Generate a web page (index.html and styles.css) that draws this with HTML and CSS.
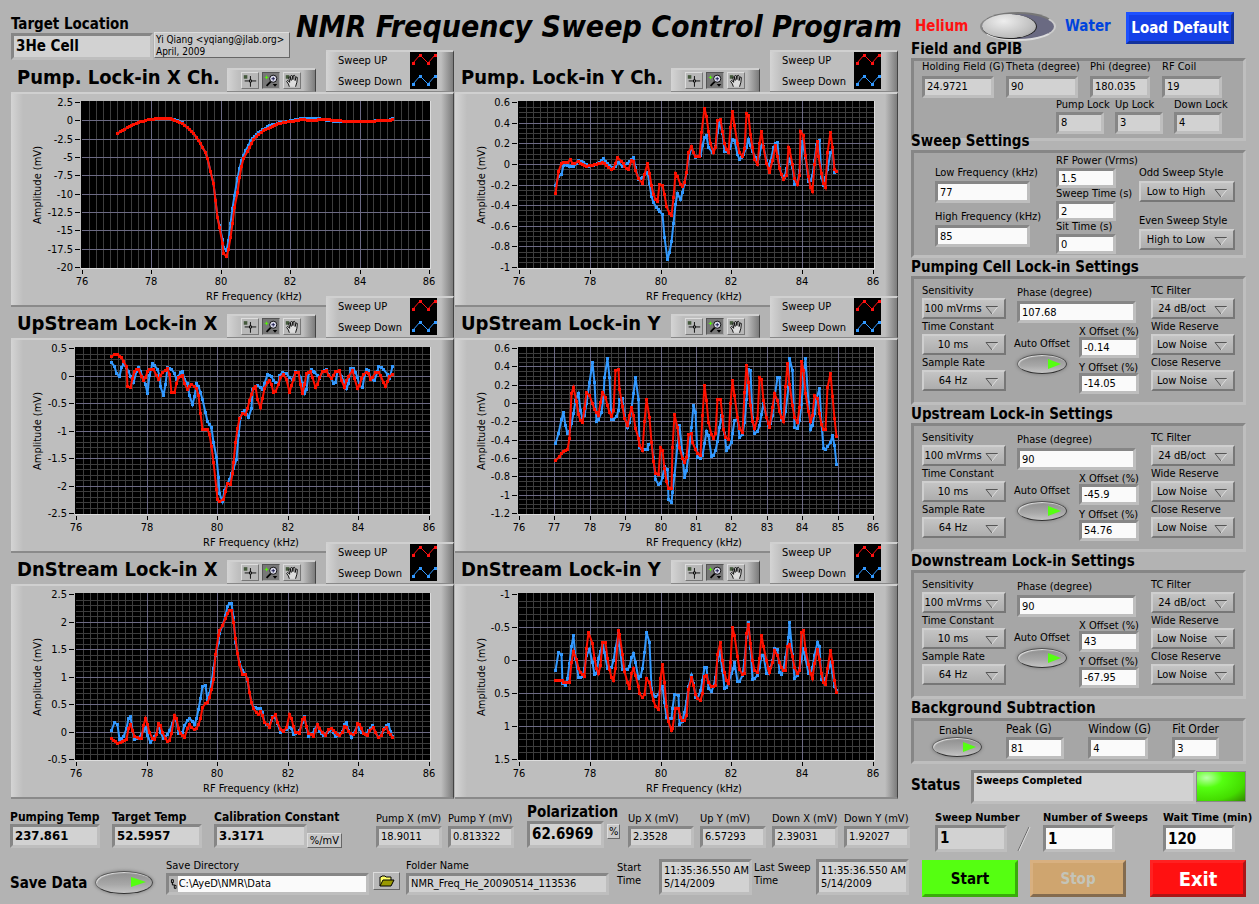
FILE: index.html
```html
<!DOCTYPE html>
<html lang="en">
  <head>
    <title>NMR Frequency Sweep Control Program</title>
    <meta charset="UTF-8">
    <link rel="stylesheet" href="styles.css">
  </head>

  <body>
  <!--Shared icons-->
  <svg class="defs" width="0" height="0">
    <symbol id="arrow" viewBox="0 0 14 10">
      <path d="M1 1.500H13M1 1.500L7 9" fill="none" stroke="#555"/>
      <path d="M13 1.500L7 9" fill="none" stroke="#ddd"/>
    </symbol>
    <symbol id="cross" viewBox="0 0 18 16">
      <path d="M2 2h4v4H2z" fill="#44583c"/>
      <path d="M3 8.500H16M9.500 3V15" stroke="#000"/>
      <path d="M8 7h3v3H8z" fill="#000"/><path d="M9 8h1v1H9z" fill="#fff"/>
    </symbol>
    <symbol id="lens" viewBox="0 0 18 16">
      <path d="M2 4.500H6M4 2.500V6.500" stroke="#5f0"/>
      <path d="M9 9L4 14" stroke="#000" stroke-width="2"/>
      <circle cx="11.500" cy="6" r="4" fill="#dde" stroke="#000"/>
      <path d="M9.500 6h4M11.500 4v4" stroke="#114"/>
      <path d="M11 12h5l-2.500 3z" fill="#000"/>
    </symbol>
    <symbol id="hand" viewBox="0 0 18 16">
      <path d="M2 2h4v4H2z" fill="#44583c"/>
      <path d="M6 15L5 12 3 9 4 8 6.500 10 5.500 5 6 4 7 4 8 8 7.500 3 8.500 2 9.500 3 10 7 10.500 2.500 11.500 2 12.500 3 12.500 8 13.500 4.500 14.500 4 15 5 14.500 10 13 15" fill="#ddd" stroke="#000"/>
    </symbol>
    <symbol id="samples" viewBox="0 0 27 37">
      <path d="M3 11L10 3L18 11L25 3" fill="none" stroke="#f11"/>
      <path d="M2 10h3v3H2zM9 2h3v3H9zM17 10h3v3h-3zM24 2h3v3h-3z" fill="#f11"/>
      <path d="M3 32L10 24L18 32L25 24" fill="none" stroke="#39f"/>
      <path d="M2 31h3v3H2zM9 23h3v3H9zM17 31h3v3h-3zM24 23h3v3h-3z" fill="#39f"/>
    </symbol>
    <symbol id="folder" viewBox="0 0 16 12">
      <path d="M1 11V2h1l1-1h3l1 1h5v3" fill="#ff6" stroke="#000"/>
      <path d="M1 11L4 5H15L12 11z" fill="#990" stroke="#000"/>
    </symbol>
    <symbol id="path" viewBox="0 0 7 12">
      <path d="M1.500 1.500h2v3h-2zM4.500 7.500h2v3h-2zM2.500 4.500V7H5" fill="none" stroke="#000"/>
    </symbol>
  </svg>

  <div class="app">
    <main class="left">
      <header class="header">
        <div class="target">
          <label class="bold15" for="target">Target Location</label>
          <output class="box target-box" id="target">3He Cell</output>
        </div>
        <div class="author">Yi Qiang &lt;yqiang@jlab.org&gt;<br>April, 2009</div>
        <h1>NMR Frequency Sweep Control Program</h1>
      </header>

      <!--Filled by charts.js-->
      <section class="charts" id="charts"></section>

      <section class="readouts">
        <div class="field w90"><label class="bold12" for="ptemp">Pumping Temp</label><output class="box big" id="ptemp">237.861</output></div>
        <div class="field w90"><label class="bold12" for="ttemp">Target Temp</label><output class="box big" id="ttemp">52.5957</output></div>
        <div class="field w128">
          <label class="bold12" for="calib">Calibration Constant</label>
          <div class="with-unit"><output class="box big w96" id="calib">3.3171</output><span class="unit">%/mV</span></div>
        </div>
        <div class="field w66 pump"><label for="pumpx">Pump X (mV)</label><output class="box" id="pumpx">18.9011</output></div>
        <div class="field w66"><label for="pumpy">Pump Y (mV)</label><output class="box" id="pumpy">0.813322</output></div>
        <div class="field polar">
          <label class="bold15" for="polar">Polarization</label>
          <div class="with-unit"><output class="box huge" id="polar">62.6969</output><span class="unit top">%</span></div>
        </div>
        <div class="field w66"><label for="upx">Up X (mV)</label><output class="box" id="upx">2.3528</output></div>
        <div class="field w66"><label for="upy">Up Y (mV)</label><output class="box" id="upy">6.57293</output></div>
        <div class="field w66"><label for="downx">Down X (mV)</label><output class="box" id="downx">2.39031</output></div>
        <div class="field w66"><label for="downy">Down Y (mV)</label><output class="box" id="downy">1.92027</output></div>
      </section>

      <section class="saving">
        <span class="bold15 save-label" id="save-label">Save Data</span>
        <button class="oval large" aria-labelledby="save-label"></button>
        <div class="field grow">
          <label for="dir">Save Directory</label>
          <div class="path-box"><svg width="7" height="12"><use href="#path"/></svg><input type="text" id="dir" value="C:\AyeD\NMR\Data"></div>
        </div>
        <button class="browse" aria-label="Browse"><svg width="16" height="12"><use href="#folder"/></svg></button>
        <div class="field grow"><label for="folder-name">Folder Name</label><output class="box" id="folder-name">NMR_Freq_He_20090514_113536</output></div>
        <label class="stamp-label start-label" for="start-time">Start Time</label>
        <output class="box stamp" id="start-time">11:35:36.550 AM<br>5/14/2009</output>
        <label class="stamp-label last-label" for="last-time">Last Sweep Time</label>
        <output class="box stamp" id="last-time">11:35:36.550 AM<br>5/14/2009</output>
      </section>
    </main>

    <aside class="right">
      <div class="mode">
        <span class="helium">Helium</span>
        <button class="slide" aria-label="Helium or Water"></button>
        <span class="water">Water</span>
        <button class="load">Load Default</button>
      </div>

      <h2>Field and GPIB</h2>
      <section class="group gpib">
        <div class="row">
          <div class="field w72"><label for="hold">Holding Field (G)</label><output class="box" id="hold">24.9721</output></div>
          <div class="field w72"><label for="theta">Theta (degree)</label><output class="box" id="theta">90</output></div>
          <div class="field w60"><label for="phi">Phi (degree)</label><output class="box" id="phi">180.035</output></div>
          <div class="field w60"><label for="coil">RF Coil</label><output class="box" id="coil">19</output></div>
        </div>
        <div class="row locks">
          <div class="field w48"><label for="plock">Pump Lock</label><output class="box" id="plock">8</output></div>
          <div class="field w48"><label for="ulock">Up Lock</label><output class="box" id="ulock">3</output></div>
          <div class="field w48"><label for="dlock">Down Lock</label><output class="box" id="dlock">4</output></div>
        </div>
      </section>

      <h2 class="over">Sweep Settings</h2>
      <section class="group sweep">
        <div class="stack w95 wide">
          <label for="low">Low Frequency (kHz)</label><input type="text" id="low" value="77">
          <label for="high">High Frequency (kHz)</label><input type="text" id="high" value="85">
        </div>
        <div class="stack w60 tight">
          <label for="power">RF Power (Vrms)</label><input type="text" id="power" value="1.5">
          <label for="stime">Sweep Time (s)</label><input type="text" id="stime" value="2">
          <label for="sit">Sit Time (s)</label><input type="text" id="sit" value="0">
        </div>
        <div class="stack w96 wide">
          <label for="odd">Odd Sweep Style</label>
          <span class="drop"><select id="odd"><option>Low to High</option></select><svg><use href="#arrow"/></svg></span>
          <label for="even">Even Sweep Style</label>
          <span class="drop"><select id="even"><option>High to Low</option></select><svg><use href="#arrow"/></svg></span>
        </div>
      </section>

      <h2>Pumping Cell Lock-in Settings</h2>
      <section class="group lockin">
        <div class="stack">
          <label for="sens1">Sensitivity</label>
          <span class="drop"><select id="sens1"><option>100 mVrms</option></select><svg><use href="#arrow"/></svg></span>
          <label for="tc1">Time Constant</label>
          <span class="drop"><select id="tc1"><option>10 ms</option></select><svg><use href="#arrow"/></svg></span>
          <label for="rate1">Sample Rate</label>
          <span class="drop"><select id="rate1"><option>64 Hz</option></select><svg><use href="#arrow"/></svg></span>
        </div>
        <div class="middle">
          <div class="stack phase"><label for="phase1">Phase (degree)</label><input type="text" id="phase1" value="107.68"></div>
          <div class="auto"><span id="auto1">Auto Offset</span><button class="oval" aria-labelledby="auto1"></button></div>
          <div class="stack offsets">
            <label for="xoff1">X Offset (%)</label><input type="text" id="xoff1" value="-0.14">
            <label for="yoff1">Y Offset (%)</label><input type="text" id="yoff1" value="-14.05">
          </div>
        </div>
        <div class="stack">
          <label for="filter1">TC Filter</label>
          <span class="drop"><select id="filter1"><option>24 dB/oct</option></select><svg><use href="#arrow"/></svg></span>
          <label for="wide1">Wide Reserve</label>
          <span class="drop"><select id="wide1"><option>Low Noise</option></select><svg><use href="#arrow"/></svg></span>
          <label for="close1">Close Reserve</label>
          <span class="drop"><select id="close1"><option>Low Noise</option></select><svg><use href="#arrow"/></svg></span>
        </div>
      </section>

      <h2>Upstream Lock-in Settings</h2>
      <section class="group lockin">
        <div class="stack">
          <label for="sens2">Sensitivity</label>
          <span class="drop"><select id="sens2"><option>100 mVrms</option></select><svg><use href="#arrow"/></svg></span>
          <label for="tc2">Time Constant</label>
          <span class="drop"><select id="tc2"><option>10 ms</option></select><svg><use href="#arrow"/></svg></span>
          <label for="rate2">Sample Rate</label>
          <span class="drop"><select id="rate2"><option>64 Hz</option></select><svg><use href="#arrow"/></svg></span>
        </div>
        <div class="middle">
          <div class="stack phase"><label for="phase2">Phase (degree)</label><input type="text" id="phase2" value="90"></div>
          <div class="auto"><span id="auto2">Auto Offset</span><button class="oval" aria-labelledby="auto2"></button></div>
          <div class="stack offsets">
            <label for="xoff2">X Offset (%)</label><input type="text" id="xoff2" value="-45.9">
            <label for="yoff2">Y Offset (%)</label><input type="text" id="yoff2" value="54.76">
          </div>
        </div>
        <div class="stack">
          <label for="filter2">TC Filter</label>
          <span class="drop"><select id="filter2"><option>24 dB/oct</option></select><svg><use href="#arrow"/></svg></span>
          <label for="wide2">Wide Reserve</label>
          <span class="drop"><select id="wide2"><option>Low Noise</option></select><svg><use href="#arrow"/></svg></span>
          <label for="close2">Close Reserve</label>
          <span class="drop"><select id="close2"><option>Low Noise</option></select><svg><use href="#arrow"/></svg></span>
        </div>
      </section>

      <h2>Downstream Lock-in Settings</h2>
      <section class="group lockin">
        <div class="stack">
          <label for="sens3">Sensitivity</label>
          <span class="drop"><select id="sens3"><option>100 mVrms</option></select><svg><use href="#arrow"/></svg></span>
          <label for="tc3">Time Constant</label>
          <span class="drop"><select id="tc3"><option>10 ms</option></select><svg><use href="#arrow"/></svg></span>
          <label for="rate3">Sample Rate</label>
          <span class="drop"><select id="rate3"><option>64 Hz</option></select><svg><use href="#arrow"/></svg></span>
        </div>
        <div class="middle">
          <div class="stack phase"><label for="phase3">Phase (degree)</label><input type="text" id="phase3" value="90"></div>
          <div class="auto"><span id="auto3">Auto Offset</span><button class="oval" aria-labelledby="auto3"></button></div>
          <div class="stack offsets">
            <label for="xoff3">X Offset (%)</label><input type="text" id="xoff3" value="43">
            <label for="yoff3">Y Offset (%)</label><input type="text" id="yoff3" value="-67.95">
          </div>
        </div>
        <div class="stack">
          <label for="filter3">TC Filter</label>
          <span class="drop"><select id="filter3"><option>24 dB/oct</option></select><svg><use href="#arrow"/></svg></span>
          <label for="wide3">Wide Reserve</label>
          <span class="drop"><select id="wide3"><option>Low Noise</option></select><svg><use href="#arrow"/></svg></span>
          <label for="close3">Close Reserve</label>
          <span class="drop"><select id="close3"><option>Low Noise</option></select><svg><use href="#arrow"/></svg></span>
        </div>
      </section>

      <h2>Background Subtraction</h2>
      <section class="group background">
        <div class="enable"><span id="enable">Enable</span><button class="oval" aria-labelledby="enable"></button></div>
        <div class="stack w60"><label for="peak">Peak (G)</label><input type="text" id="peak" value="81"></div>
        <div class="stack w60"><label for="window">Window (G)</label><input type="text" id="window" value="4"></div>
        <div class="stack w48"><label for="fit">Fit Order</label><input type="text" id="fit" value="3"></div>
      </section>

      <section class="status">
        <label class="bold15" for="status">Status</label>
        <output class="box status-box" id="status">Sweeps Completed</output>
        <span class="led"></span>
      </section>

      <section class="counts">
        <div class="field w72"><label class="bold11" for="snum">Sweep Number</label><output class="box count" id="snum">1</output></div>
        <svg class="slash" width="14" height="26"><path d="M1 25L12 1" stroke="#666"/><path d="M2 25L13 1" stroke="#ddd"/></svg>
        <div class="field w72"><label class="bold11" for="total">Number of Sweeps</label><input class="count" type="text" id="total" value="1"></div>
        <div class="field w72 wait"><label class="bold11" for="wait">Wait Time (min)</label><input class="count" type="text" id="wait" value="120"></div>
      </section>

      <section class="actions">
        <button class="start">Start</button>
        <button class="stop" disabled>Stop</button>
        <button class="exit">Exit</button>
      </section>
    </aside>
  </div>

  <script src="charts.js"></script>
  </body>
</html>
```
FILE: styles.css
```css
* {box-sizing: border-box;}
body {
	margin: 0;
	background: #b3b3b3;
	color: #000;
	font: 11px/14px "DejaVu Sans Condensed", "DejaVu Sans", sans-serif;
}
input, select, button, output {font: inherit; color: inherit;}
label, span, output {white-space: nowrap;}
.defs {position: absolute;}
.app {
	display: grid;
	grid-template-columns: minmax(0, 1fr) 344px;
	padding: 0 4px 0 10px;
}
.bold11 {font-size: 11px; font-weight: bold;}
.bold12 {font-size: 12px; font-weight: bold;}
.bold15, h2 {
	font-size: 15px;
	line-height: 18px;
	font-weight: bold;
	margin: 0;
}

/* widths */
.w48 {width: 48px;}
.w60 {width: 60px;}
.w66 {width: 66px;}
.w72 {width: 72px;}
.w90 {width: 90px;}
.w95 {width: 95px;}
.w96 {width: 96px;}
.w128 {width: 128px;}

/* sunken boxes */
.box, input[type=text], .path-box {
	display: block;
	width: 100%;
	height: 22px;
	border: 3px solid;
	border-color: #868686 #bebebe #bebebe #868686;
	background: #d2d2d2;
	padding: 0 2px;
	line-height: 16px;
}
input[type=text] {background: #fafafa;}
.box.w96 {width: 96px;}
.field, .stack {display: flex; flex-direction: column;}
.big {
	height: 24px;
	font-size: 13px;
	line-height: 18px;
	font-weight: bold;
}
.huge {
	height: 27px;
	width: 77px;
	font-size: 15px;
	line-height: 21px;
	font-weight: bold;
}
.unit {
	border: 1px solid;
	border-color: #ddd #666 #666 #ddd;
	background: #c8c8c8;
	padding: 0 2px;
	line-height: 13px;
}
.unit.top {align-self: flex-start; margin: 3px 0 0 3px; padding: 0 1px;}
.with-unit {display: flex; align-items: flex-end;}

/* header */
.header {display: flex; height: 61px; padding-left: 1px;}
.target {width: 142px; padding-top: 15px;}
.target label {display: block;}
.target-box {
	height: 27px;
	font-size: 15px;
	line-height: 21px;
	font-weight: bold;
}
.author {
	width: 136px;
	height: 26px;
	margin: 32px 0 0 1px;
	padding: 1px;
	border: 1px solid;
	border-color: #ddd #666 #666 #ddd;
	background: #c8c8c8;
	font-size: 10px;
	line-height: 12px;
	white-space: nowrap;
}
h1 {
	margin: 0 0 0 6px;
	font-size: 30px;
	line-height: 54px;
	font-style: italic;
	white-space: nowrap;
}

/* charts */
.charts {
	display: grid;
	grid-template-columns: 1fr 1fr;
	column-gap: 1px;
	padding: 0 13px 0 1px;
}
.chart {margin-top: -10px; min-width: 0;}
.chart-head {
	position: relative;
	display: flex;
	align-items: flex-end;
	height: 41px;
}
.chart-head h3 {
	flex: 1;
	margin: 0 0 0 6px;
	font-size: 20px;
	line-height: 29px;
	white-space: nowrap;
}
.palette, .legend, .graph {
	background: linear-gradient(90deg, #d4d4d4, #bebebe 12px, #bebebe calc(100% - 12px), #7c7c7c);
	border-top: 2px solid #d0d0d0;
	border-right: 1px solid #444;
}
.palette {
	display: flex;
	gap: 3px;
	width: 89px;
	height: 24px;
	padding: 2px 0 0 14px;
	margin-right: 10px;
	border-bottom: 1px solid #888;
}
.palette button {
	width: 18px;
	height: 17px;
	padding: 0;
	border: 1px solid;
	border-color: #ddd #777 #777 #ddd;
	background: #b8b8b8;
}
.palette button.on {background: #777; border-color: #555 #aaa #aaa #555;}
.palette svg, .browse svg {display: block;}
.legend {
	display: flex;
	width: 128px;
	height: 42px;
	padding-left: 12px;
	border-bottom: 1px solid #888;
}
.legend ul {
	width: 72px;
	margin: -2px 0 0;
	padding: 0;
	list-style: none;
	line-height: 21px;
}
.legend svg {background: #000; width: 27px; height: 37px;}
.graph {border-bottom: 2px solid #8a8a8a;}
.graph svg {display: block; width: 100%; margin: -2px 0;}
.graph text {font-size: 11px;}

/* bottom rows */
.readouts {display: flex; align-items: flex-end; height: 49px; gap: 6px;}
.readouts .w90 {margin-right: 6px;}
.readouts .pump {margin-left: 28px;}
.readouts .polar {width: 95px; margin-left: 7px;}
.saving {display: flex; align-items: flex-end; height: 47px; padding-right: 2px;}
.save-label {width: 84px; padding-bottom: 3px;}
.grow {flex: 1;}
.path-box {display: flex; padding: 0; background: #b3b3b3;}
.path-box svg {margin: 2px 1px;}
.path-box input[type=text] {border: 0; height: 16px; padding: 0 1px;}
.browse {
	width: 27px;
	height: 18px;
	margin: 0 6px 5px 4px;
	padding: 1px 5px;
	border: 1px solid;
	border-color: #ddd #666 #666 #ddd;
	background: #b8b8b8;
}
.stamp-label {white-space: normal; line-height: 13px; padding-bottom: 8px;}
.start-label {width: 42px; margin-left: 8px;}
.last-label {width: 62px; margin-left: 2px;}
.stamp {width: 93px; height: 36px; line-height: 13px; padding-top: 2px;}

/* ovals and switches */
.oval {
	position: relative;
	width: 50px;
	height: 20px;
	padding: 0;
	border: 1px solid;
	border-color: #555 #444 #333 #666;
	border-radius: 50%;
	background: linear-gradient(#8e8e8e, #a8a8a8 60%, #c4c4c4);
	box-shadow: inset 1px 1px 1px #ddd, 0 0 3px 1px #8c8c8c;
}
.oval:after {
	content: "";
	position: absolute;
	right: 5px;
	top: 4px;
	border-left: 13px solid #5f1;
	border-top: 5px solid transparent;
	border-bottom: 5px solid transparent;
}
.oval.large {width: 58px; height: 23px; margin: 0 13px 1px 1px;}
.oval.large:after {right: 6px; top: 5px; border-left-width: 15px;}
.slide {
	width: 76px;
	height: 29px;
	padding: 0;
	border: 2px solid;
	border-color: #777 #ccc #ddd #888;
	border-radius: 50%;
	background: #6a6a82;
}
.slide:after {
	content: "";
	display: block;
	width: 54px;
	height: 24px;
	border-radius: 50%;
	border-bottom: 1px solid #222;
	border-right: 1px solid #222;
	background: radial-gradient(at 40% 30%, #eee, #bbb 70%, #888);
}

/* right column */
.mode {display: flex; align-items: center; height: 40px; padding: 12px 0 0 4px;}
.mode span {font-size: 15px; font-weight: bold;}
.helium {color: #f11; width: 65px;}
.water {color: #04d; width: 61px; margin-left: 9px;}
.load {
	width: 108px;
	height: 32px;
	padding: 0;
	border: 3px outset #1c4cf0;
	background: #1540e8;
	color: #fff;
	font-size: 15px;
	font-weight: bold;
	white-space: nowrap;
	align-self: flex-start;
}
.group {
	width: 335px;
	border: 3px solid;
	border-color: #868686 #bebebe #bebebe #868686;
	background: #a6a6a6;
}
.row {display: flex; gap: 12px; height: 37px;}
.gpib {height: 83px; padding-left: 8px;}
.gpib .row:first-child .field {gap: 3px;}
.gpib .row:first-child label {line-height: 12px;}
.gpib .locks {gap: 11px; padding-left: 134px;}
h2.over {position: relative; margin-top: -9px;}
.sweep {display: flex; height: 108px; padding-left: 21px;}
.wide {padding-top: 12px;}
.wide label {line-height: 16px;}
.wide input[type=text] {margin-bottom: 6px;}
.wide .drop {margin-bottom: 11px;}
.tight {margin: 0 23px 0 26px; padding-top: 2px;}
.tight label, .offsets label {position: relative; line-height: 12px;}
.tight label {margin-bottom: 1px;}
.tight input[type=text] {height: 20px; line-height: 14px;}
.drop {position: relative; height: 21px; display: block;}
.drop select {
	width: 100%;
	height: 21px;
	appearance: none;
	border: 2px solid;
	border-color: #cfcfcf #777 #777 #cfcfcf;
	border-radius: 0;
	background: linear-gradient(#c4c4c4, #adadad);
	padding: 0 22px 0 0;
	text-align-last: center;
	line-height: 15px;
}
.drop svg {position: absolute; right: 7px; top: 7px; width: 14px; height: 10px;}
.lockin {display: flex; justify-content: space-between; height: 129px; padding: 4px 8px 0 8px;}
.lockin > .stack {width: 84px;}
.lockin > .stack label {line-height: 15px;}
.middle {
	display: grid;
	grid-template-columns: 62px 64px;
	grid-template-rows: 43px 1fr;
	padding-left: 3px;
}
.phase {grid-column: 1 / 3; padding-top: 3px; width: 119px;}
.phase input[type=text] {margin-top: 1px;}
.auto {padding-top: 11px; margin-left: -3px;}
.auto .oval {display: block; margin: 3px 0 0 3px;}
.offsets {width: 60px;}
.offsets input[type=text] {height: 21px; margin: -1px 0 4px;}
.background {display: flex; height: 46px; padding-left: 18px; margin-top: 1px;}
.background .stack label {font-size: 12px; line-height: 15px;}
.background .stack {margin-right: 24px; padding-top: 1px;}
.enable {width: 76px; padding-top: 4px;}
.enable span {display: block; margin-left: 7px; line-height: 12px;}
.enable .oval {display: block;}
.status {display: flex; align-items: flex-start; margin-top: 6px;}
.status label {width: 60px; padding-top: 6px;}
.status-box {width: 225px; height: 34px; font-weight: bold;}
.led {
	width: 50px;
	height: 31px;
	margin-top: 1px;
	border: 1px solid #888;
	background: radial-gradient(at 20% 20%, #bfa, #5f1 30%, #4d0 70%, #380);
}
.counts {display: flex; align-items: flex-end; height: 48px; padding-left: 24px;}
.count, input[type=text].count {
	height: 27px;
	font-size: 15px;
	line-height: 21px;
	font-weight: bold;
}
.slash {margin: 0 12px 0 10px;}
.wait {margin-left: 48px;}
.actions {display: flex; gap: 12px; padding: 8px 0 8px 11px;}
.actions button {
	width: 96px;
	height: 37px;
	padding: 0;
	font-size: 15px;
	font-weight: bold;
}
.actions .start {background: #5f1; border: 3px outset #5f1;}
.actions .stop {background: #cfa56f; border: 3px outset #d8b080; color: #c4c4b8;}
.actions .exit {background: #f11; border: 3px outset #f22; color: #fff; font-size: 20px; margin-left: 12px;}
```
FILE: charts.js
```js
// Trace points are "x,y" pairs in thirds of a pixel; ox, oy is the panel corner in the same units.
var LEFT = {ox: 33, x0: 65, x1: 418};
var RIGHT = {ox: 0, x0: 64, x1: 418};

var charts = [
	{title: "Pump. Lock-in X Ch.", side: {ox: 33, x0: 71, x1: 418}, oy: 276, step: 2, sub: 1,
	 ticks: ["2.5", "0", "-2.5", "-5", "-7.5", "-10", "-12.5", "-15", "-17.5", "-20"],
	 up: "352,398 366,390 387,378 407,368 428,362 450,356 480,354 510,355 522,359 545,369 560,382 580,400 595,420 607,440 620,473 630,512 638,550 645,600 652,650 658,680 665,728 670,760 677,767 683,748 690,710 697,668 703,620 710,575 717,530 723,497 730,475 740,452 752,428 768,408 790,391 815,377 840,368 870,363 900,358 940,359 980,357 1000,361 1050,362 1090,364 1130,361 1165,360 1176,357",
	 down: "352,398 366,390 387,378 407,368 428,362 450,356 480,354 510,355 522,357 545,367 560,380 580,400 595,420 607,440 620,473 630,512 638,550 645,600 652,650 658,675 665,716 670,740 677,750 683,720 690,670 697,625 703,585 710,535 717,505 724,480 735,450 750,420 768,402 800,378 830,368 870,361 900,355 950,354 1000,362 1090,363 1165,359 1176,353"},
	{title: "Pump. Lock-in Y Ch.", side: RIGHT, oy: 276, step: 2, sub: 4,
	 ticks: ["0.6", "0.4", "0.2", "0", "-0.2", "-0.4", "-0.6", "-0.8", "-1"],
	 up: "301,580 310,512 317,488 323,485 337,485 344,476 350,490 358,490 368,483 380,492 394,497 410,494 428,490 441,485 448,488 460,502 467,508 475,504 487,472 497,483 508,497 520,508 527,480 534,484 541,510 550,535 560,550 568,521 575,490 581,518 587,556 593,583 600,598 607,602 613,553 620,554 626,583 634,617 641,640 647,646 653,590 659,520 667,529 674,552 680,557 686,547 693,515 700,457 707,439 713,455 720,468 733,469 739,397 746,323 752,349 760,394 766,430 773,457 779,440 785,361 794,358 800,392 806,430 812,447 818,457 826,382 832,334 838,376 845,428 851,455 860,467 866,445 872,338 878,344 884,403 890,440 898,478 905,493 911,430 917,394 925,440 932,488 943,517 950,480 960,434 965,467 972,503 985,538 992,525 998,442 1003,448 1010,493 1018,533 1025,553 1031,525 1036,392 1043,404 1050,465 1058,527 1064,562 1070,574 1077,493 1085,422 1090,467 1097,518 1103,550 1109,562 1117,457 1124,395 1130,440 1136,508 1142,514",
	 down: "301,556 310,528 317,522 325,494 335,494 343,499 355,499 368,480 385,486 400,498 425,490 443,475 455,490 470,500 480,498 490,487 500,499 515,490 535,472 541,502 548,537 560,532 570,518 577,515 583,550 587,587 593,607 602,622 613,632 620,643 626,712 635,776 641,757 647,724 653,670 659,613 667,580 674,596 680,577 686,548 693,520 700,475 707,440 720,472 735,466 740,436 746,412 752,404 760,442 770,455 779,437 785,397 793,367 800,400 806,454 815,452 826,434 832,418 838,420 845,463 853,476 865,463 872,440 878,418 885,436 892,454 900,470 905,488 911,463 918,434 925,437 932,480 938,494 945,484 955,440 960,428 965,425 972,500 980,528 987,530 993,505 1003,476 1010,500 1018,553 1025,550 1032,510 1042,422 1050,470 1058,544 1064,540 1070,525 1077,480 1084,433 1091,419 1097,530 1103,556 1110,530 1117,506 1124,457 1130,450 1136,517 1142,514"},
	{title: "UpStream Lock-in X", side: LEFT, oy: 114, step: 2, sub: 5,
	 ticks: ["0.5", "0", "-0.5", "-1", "-1.5", "-2", "-2.5"],
	 up: "334,167 342,163 350,163 356,167 362,172 370,182 377,197 382,258 389,262 395,235 401,214 408,207 415,206 422,228 428,241 434,230 440,214 448,208 460,206 467,225 474,237 480,225 487,215 500,204 508,221 514,275 521,277 527,248 533,232 547,225 553,248 560,266 567,258 574,253 581,257 588,265 594,285 601,338 607,386 620,386 626,403 634,437 640,485 647,566 652,598 658,604 668,596 674,573 680,548 690,552 695,520 700,485 706,425 712,383 718,355 725,340 735,342 740,325 746,300 752,283 758,265 766,258 772,297 779,320 785,293 793,263 800,245 806,241 812,253 818,277 826,272 833,253 839,232 848,222 858,238 866,277 872,255 878,236 885,217 893,216 899,251 905,278 911,253 918,220 930,213 937,230 944,260 950,252 958,230 965,214 977,209 985,225 993,235 998,225 1005,213 1018,211 1024,240 1031,260 1038,241 1045,228 1055,211 1063,235 1070,263 1076,254 1083,233 1090,222 1097,215 1103,220 1109,238 1117,232 1124,217 1135,216 1141,225 1148,247 1156,257 1162,243 1168,228 1175,223",
	 down: "334,187 343,199 349,220 356,227 362,202 370,192 377,200 383,212 390,228 400,245 407,214 415,202 421,212 428,237 434,253 442,278 448,225 455,190 462,194 470,207 476,225 481,257 488,284 494,252 500,200 508,203 514,208 521,220 528,238 540,215 547,214 553,236 560,250 568,284 575,311 581,288 587,248 594,259 600,275 607,298 614,335 620,362 627,371 634,382 640,425 647,472 653,530 658,580 667,602 673,570 680,550 686,538 692,518 700,503 707,478 713,405 719,350 727,337 733,331 739,343 745,350 752,325 757,268 766,257 772,254 779,262 786,266 793,248 800,223 812,228 818,240 826,247 833,250 838,225 845,217 858,220 866,232 875,237 884,214 893,217 899,230 905,250 911,278 917,268 924,220 932,208 943,217 958,233 965,214 977,208 985,222 992,235 998,250 1005,247 1010,212 1018,213 1024,228 1031,245 1037,265 1043,250 1050,203 1058,205 1065,217 1070,230 1076,255 1085,262 1091,225 1097,206 1104,211 1110,235 1123,239 1130,213 1135,197 1143,200 1150,208 1160,222 1168,235 1175,197"},
	{title: "UpStream Lock-in Y", side: RIGHT, oy: 114, step: 1, sub: 4,
	 ticks: ["0.6", "0.4", "0.2", "0", "-0.2", "-0.4", "-0.6", "-0.8", "-1", "-1.2"],
	 up: "301,481 311,468 317,460 324,454 335,446 343,413 349,280 355,260 362,304 368,343 375,360 382,367 388,325 394,275 401,284 410,308 416,326 428,344 434,307 442,275 449,290 455,314 461,337 467,347 475,330 481,209 488,207 493,268 500,318 508,353 515,376 521,345 527,321 535,346 541,384 548,415 553,435 560,449 568,362 574,296 581,350 587,427 593,482 601,518 608,523 614,440 620,449 626,505 634,544 640,563 647,563 652,440 658,341 666,380 673,440 680,475 686,485 692,470 700,403 707,398 712,426 719,446 727,460 734,464 740,344 746,254 752,301 760,367 767,403 773,415 779,398 785,296 794,296 800,349 805,388 811,410 818,418 826,310 832,239 838,285 845,350 851,383 860,396 866,277 872,194 878,247 884,315 892,364 898,383 905,355 911,230 918,236 925,301 932,350 938,370 943,382 952,322 958,278 965,301 971,332 978,350 985,364 991,257 997,190 1003,251 1010,314 1018,350 1025,367 1031,320 1037,184 1043,209 1051,279 1058,332 1064,362 1070,346 1076,284 1085,295 1091,340 1097,372 1103,386 1109,388 1117,262 1124,220 1130,287 1136,355 1142,407",
	 down: "301,430 310,398 317,358 323,335 329,374 335,398 343,392 349,370 355,338 361,300 368,278 375,330 381,355 388,345 394,310 401,247 410,187 416,247 422,364 430,357 437,335 443,290 448,232 455,173 461,232 467,358 475,358 482,349 488,331 493,298 500,293 508,345 515,380 521,367 528,325 535,280 541,232 548,298 553,440 560,449 575,447 580,433 587,425 593,470 601,538 608,553 614,550 620,532 627,498 635,506 640,598 647,607 652,577 658,524 665,435 673,376 680,460 686,532 692,509 700,466 707,380 713,314 719,337 727,472 734,475 740,464 746,430 752,392 760,406 767,467 773,464 779,451 785,424 793,382 799,346 806,400 812,449 818,442 827,427 832,400 838,361 845,355 851,412 860,403 866,367 872,296 878,206 884,211 890,350 898,398 905,394 911,376 918,341 925,310 932,350 938,376 945,370 952,345 958,290 965,232 971,230 977,358 985,364 991,333 998,260 1003,175 1010,209 1018,382 1025,385 1031,360 1037,313 1043,232 1051,175 1058,305 1064,388 1070,374 1077,340 1084,293 1091,265 1097,370 1103,445 1109,446 1117,439 1124,427 1130,406 1136,434 1142,493"},
	{title: "DnStream Lock-in X", side: LEFT, oy: 117, step: 2, sub: 5,
	 ticks: ["2.5", "2", "1.5", "1", "0.5", "0", "-0.5"],
	 up: "334,580 345,587 352,593 365,589 377,583 383,550 389,538 395,555 401,572 410,577 422,580 428,540 434,518 442,538 448,562 455,580 462,582 468,568 475,535 481,541 487,562 494,580 501,587 508,586 514,565 521,511 527,520 533,548 540,565 553,575 560,550 568,538 574,545 581,551 588,548 594,538 601,520 607,487 614,475 620,472 626,457 634,433 640,403 646,328 653,271 658,254 667,240 674,220 680,205 686,196 692,194 700,230 706,280 712,323 718,358 725,388 734,388 740,403 746,440 752,470 758,490 767,502 773,506 779,497 785,510 793,530 800,538 808,546 817,515 826,508 832,530 839,552 850,559 858,545 866,506 872,520 878,544 886,560 898,564 905,523 911,517 917,542 925,564 938,572 945,555 950,536 957,548 965,562 975,569 985,553 992,548 998,556 1005,562 1018,569 1025,560 1031,544 1037,545 1043,558 1058,568 1064,561 1070,533 1076,536 1083,550 1090,564 1102,571 1108,555 1118,546 1125,560 1135,575 1142,570 1150,552 1157,546 1163,560 1175,575",
	 down: "334,556 343,530 350,538 356,583 368,572 377,550 383,520 389,514 395,555 401,583 415,577 422,568 428,555 434,545 442,570 449,590 456,582 467,565 475,537 481,560 488,580 500,568 508,556 515,535 521,515 527,525 534,565 545,562 553,541 560,526 568,518 575,527 581,536 587,518 594,493 601,460 607,422 614,419 620,462 626,443 634,410 640,370 646,330 653,290 658,265 667,240 674,210 680,184 686,173 692,175 700,215 706,290 712,323 718,352 725,375 734,386 740,405 746,440 752,470 758,487 779,488 785,500 793,532 805,540 812,525 817,513 826,517 832,535 839,562 850,556 866,545 872,550 878,568 890,560 898,555 905,530 911,512 917,545 925,574 935,565 950,537 957,558 968,571 980,562 992,548 1005,573 1018,568 1025,558 1031,538 1037,530 1043,555 1052,577 1060,565 1070,540 1083,562 1095,568 1103,555 1117,540 1125,562 1135,575 1145,560 1157,540 1163,536 1170,558 1175,573"},
	{title: "DnStream Lock-in Y", side: RIGHT, oy: 117, step: 2, sub: 5,
	 ticks: ["-1", "-0.5", "0", "0.5", "1", "1.5"],
	 up: "301,406 320,406 324,412 343,412 349,350 355,318 362,343 368,370 375,382 388,394 394,310 400,262 410,295 416,338 422,368 428,385 434,360 442,290 449,292 455,338 461,373 467,396 475,406 481,370 488,254 493,268 500,328 508,378 515,410 521,430 527,385 535,368 541,390 548,424 553,445 560,457 568,448 574,400 581,410 587,442 593,466 601,482 608,493 614,400 620,358 626,412 634,482 640,527 647,556 652,548 659,490 668,490 674,515 680,526 686,524 692,510 700,432 707,397 713,420 719,446 727,460 734,466 740,443 746,392 752,390 760,410 767,424 779,421 785,328 794,290 800,346 806,382 812,406 818,415 826,352 832,247 838,270 845,334 851,373 860,388 866,385 872,265 878,237 884,295 890,346 898,376 905,382 911,340 917,270 925,304 932,346 938,370 943,382 952,352 958,316 965,330 971,352 978,367 985,376 991,375 997,302 1003,296 1010,332 1018,365 1025,385 1031,375 1037,260 1043,256 1051,313 1058,358 1064,385 1070,400 1076,355 1085,313 1091,343 1097,385 1103,410 1109,418 1117,370 1124,316 1130,352 1136,404 1142,442",
	 down: "301,376 310,322 317,328 322,415 329,419 335,398 343,355 349,302 355,271 361,340 368,397 380,394 388,368 394,330 401,313 410,352 416,388 422,385 430,340 442,295 448,320 455,370 468,365 475,346 481,310 488,265 493,300 500,373 515,373 521,362 528,337 535,325 541,352 548,400 554,392 560,368 568,320 574,262 581,290 587,430 593,451 601,454 608,446 614,430 620,424 626,472 634,517 640,520 647,520 652,488 658,446 668,451 673,536 680,527 686,502 692,469 700,424 707,391 713,415 719,457 727,458 734,436 740,406 746,367 752,365 760,428 767,437 773,424 779,395 785,345 793,316 800,376 806,430 812,425 818,410 827,385 838,352 845,409 852,408 860,390 866,346 872,275 878,230 884,310 892,403 898,400 905,391 911,367 918,331 924,329 932,385 940,384 952,345 958,308 965,312 971,382 977,388 985,370 991,335 998,277 1003,232 1010,328 1018,400 1025,391 1031,370 1043,308 1051,340 1058,385 1064,384 1070,365 1076,330 1085,292 1091,304 1097,403 1103,412 1109,400 1117,380 1124,350 1130,380 1136,424 1142,434"}
];

var TOP = 10, BOTTOM = 175;

// One sample roughly every two pixels, drawn as a line with square markers
function trace(points, chart, color) {
	var pts = points.split(" ").map(function (p) {
		var xy = p.split(",");
		return [(xy[0] - chart.side.ox) / 3, (xy[1] - chart.oy) / 3];
	});
	var line = "", marks = "";
	pts.forEach(function (p, i) {
		var from = i ? pts[i - 1] : p;
		var n = Math.max(1, Math.round((p[0] - from[0]) / 2.3));
		for (var k = 1; k <= n; k++) {
			var x = Math.round(from[0] + (p[0] - from[0]) * k / n);
			var y = Math.round(from[1] + (p[1] - from[1]) * k / n);
			line += x + "," + y + " ";
			marks += "M" + (x - 1) + " " + (y - 1) + "h3v3h-3z";
		}
	});
	return '<polyline points="' + line + '" fill="none" stroke="' + color + '" stroke-width="2" transform="translate(.5 .5)"/>' +
		'<path d="' + marks + '" fill="' + color + '" shape-rendering="crispEdges"/>';
}

function graph(c) {
	var x0 = c.side.x0, x1 = c.side.x1, minor = "", major = "", marks = "", text = "";
	for (var i = 0; i <= 50; i++) {
		var x = Math.round(x0 + (x1 - x0) * i / 50);
		var vline = "M" + x + " " + (TOP - 1) + "h1V" + (BOTTOM + 1) + "h-1z";
		if (i % (5 * c.step)) {
			minor += vline;
			continue;
		}
		if (i && i < 50) major += vline;
		marks += "M" + x + " 178h1v4h-1z";
		text += '<text x="' + x + '" y="193" text-anchor="middle">' + (76 + i / 5) + '</text>';
	}
	var rows = (c.ticks.length - 1) * c.sub;
	for (var j = 0; j <= rows; j++) {
		var y = Math.round(TOP + (BOTTOM - TOP) * j / rows);
		var hline = "M" + x0 + " " + y + "H" + (x1 + 1) + "v1H" + x0 + "z";
		if (j % c.sub) {
			minor += hline;
			continue;
		}
		if (j && j < rows) major += hline;
		marks += "M" + (x0 - 7) + " " + y + "h5v1h-5z";
		text += '<text x="' + (x0 - 9) + '" y="' + (y + 4) + '" text-anchor="end">' + c.ticks[j / c.sub] + '</text>';
	}
	return '<svg viewBox="0 0 442 215">' +
		'<path d="M' + (x0 - 1) + ' ' + (TOP - 1) + 'H' + (x1 + 2) + 'V' + (BOTTOM + 2) + 'H' + (x0 - 1) + 'z" fill="#ddd"/>' +
		'<path d="M' + (x0 - 1) + ' ' + (TOP - 1) + 'H' + (x1 + 1) + 'V' + (BOTTOM + 1) + 'H' + (x0 - 1) + 'z" fill="#000"/>' +
		'<g shape-rendering="crispEdges"><path d="' + minor + '" fill="#3d3d3d"/>' +
		'<path d="' + major + '" fill="#6c6a84"/><path d="' + marks + '" fill="#000"/></g>' +
		trace(c.down, c, "#3399ff") + trace(c.up, c, "#ff1100") + text +
		'<text x="' + Math.round((x0 + x1) / 2 - 2) + '" y="208" text-anchor="middle">RF Frequency (kHz)</text>' +
		'<text transform="translate(30 93) rotate(-90)" text-anchor="middle">Amplitude (mV)</text>' +
		'</svg>';
}

document.getElementById("charts").innerHTML = charts.map(function (c) {
	return '<div class="chart"><div class="chart-head"><h3>' + c.title + '</h3>' +
		'<div class="palette">' +
		'<button aria-label="Cursor"><svg width="16" height="15"><use href="#cross"/></svg></button>' +
		'<button class="on" aria-label="Zoom"><svg width="16" height="15"><use href="#lens"/></svg></button>' +
		'<button aria-label="Pan"><svg width="16" height="15"><use href="#hand"/></svg></button></div>' +
		'<div class="legend"><ul><li>Sweep UP</li><li>Sweep Down</li></ul><svg><use href="#samples"/></svg></div></div>' +
		'<div class="graph">' + graph(c) + '</div></div>';
}).join("");
```
